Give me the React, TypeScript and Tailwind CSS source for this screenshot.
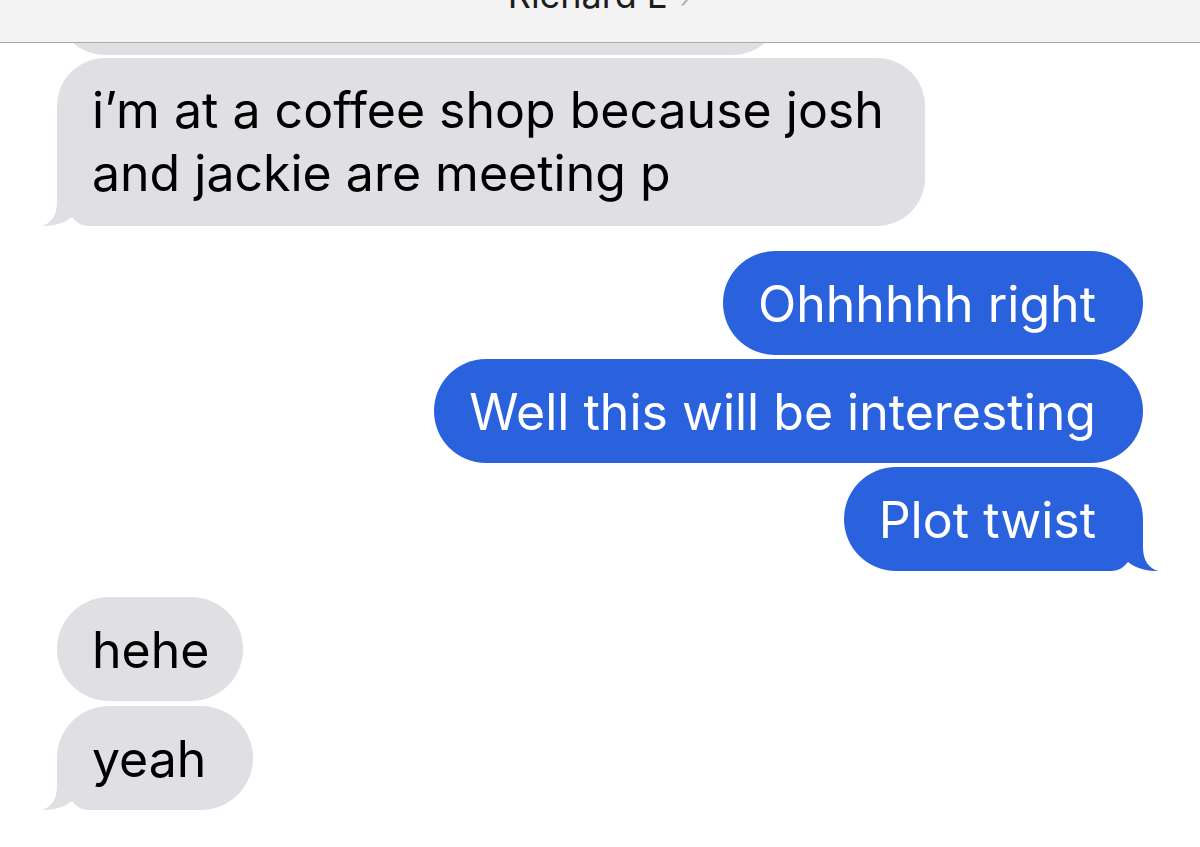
import React from "react";

const font = { fontFamily: "Inter, 'Noto Sans', sans-serif" };

function Tail({ side, color }: { side: "left" | "right"; color: string }) {
  // drawn for the right side, mirrored for the left; covers the bubble corner
  return (
    <svg
      width="67"
      height="52"
      viewBox="0 0 67 52"
      className={
        side === "right"
          ? "absolute bottom-0 right-[-15px]"
          : "absolute bottom-0 left-[-15px] -scale-x-100"
      }
    >
      <path
        d="M0 0 H52 V28 C52 42 58 49 67 52 C59 52.5 45 50 37 43 C33 48 28 52 20 52 H0 Z"
        fill={color}
      />
    </svg>
  );
}

function Bubble({
  text,
  me,
  tail,
  className = "",
}: {
  text: React.ReactNode;
  me?: boolean;
  tail?: boolean;
  className?: string;
}) {
  return (
    <div
      className={
        "relative pl-[35px] pr-[47px] text-[50px] leading-[63px] " +
        (me
          ? "self-end bg-[#2a62de] text-white "
          : "self-start bg-[#e0e0e4] text-black ") +
        className
      }
    >
      <span className="relative z-10 whitespace-nowrap">{text}</span>
      {tail && <Tail side={me ? "right" : "left"} color={me ? "#2a62de" : "#e0e0e4"} />}
    </div>
  );
}

export default function App() {
  return (
    <main
      className="relative w-full h-[847px] overflow-hidden bg-white"
      style={font}
    >
      <header className="absolute top-0 left-0 right-0 z-20 h-[43px] overflow-hidden border-b border-[#a9a9a9] bg-[#f3f3f3]/95 flex justify-center">
        <div className="-mt-[23px] h-[36px] leading-[36px] text-[36px] text-[#1c1c1c] flex gap-3">
          <span>Richard L</span>
          <span className="text-[#b5b5b5] font-light">›</span>
        </div>
      </header>

      <div className="flex flex-col px-[57px] -mt-[113px]">
        <div className="self-start w-[724px] h-[168px] rounded-[48px] bg-[#e0e0e4]" />

        <Bubble
          className="mt-[3px] w-[868px] pt-[21px] pb-[21px] rounded-[48px]"
          text={
            <>
              i’m at a coffee shop because josh
              <br />
              and jackie are meeting p
            </>
          }
          tail
        />

        <Bubble me className="mt-[25px] pt-[22px] pb-[19px] rounded-[52px]" text="Ohhhhhh right" />
        <Bubble me className="mt-[4px] pt-[22px] pb-[19px] rounded-[52px]" text="Well this will be interesting" />
        <Bubble me tail className="mt-[4px] pt-[22px] pb-[19px] rounded-[52px]" text="Plot twist" />

        <Bubble className="mt-[26px] w-[186px] pt-[22px] pb-[19px] rounded-[52px]" text="hehe" />
        <Bubble tail className="mt-[5px] pt-[22px] pb-[19px] rounded-[52px]" text="yeah" />
      </div>
    </main>
  );
}
